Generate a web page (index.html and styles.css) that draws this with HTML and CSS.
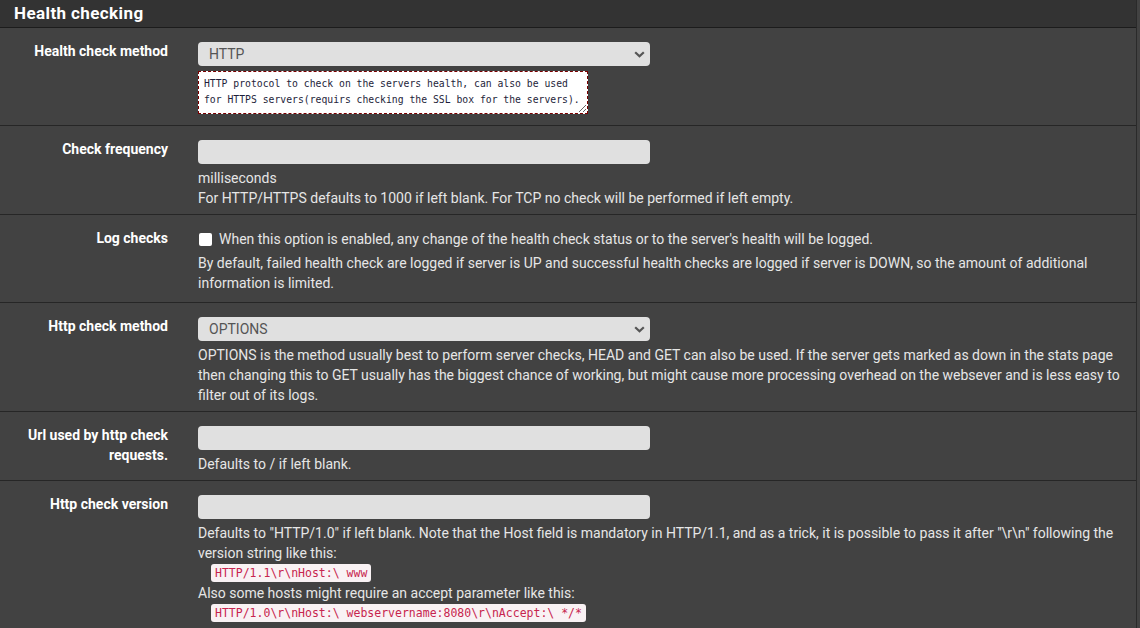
FILE: index.html
```html
<!DOCTYPE html>
<html>
<head>
<meta charset="utf-8">
<link rel="stylesheet" href="styles.css">
</head>
<body>
<div class="panel">
  <div class="panel-heading">Health checking</div>

  <div class="row r1">
    <div class="label">Health check method</div>
    <div class="ctrl">
      <div class="select-wrap">
        <select class="select"><option>HTTP</option></select>
        <svg class="chev" width="11" height="7" viewBox="0 0 11 7"><path d="M1.2 1.2 L5.5 5.3 L9.8 1.2" fill="none" stroke="#555" stroke-width="2.2"/></svg>
      </div>
      <textarea class="note" readonly>HTTP protocol to check on the servers health, can also be used for HTTPS servers(requirs checking the SSL box for the servers).</textarea>
    </div>
  </div>

  <div class="row">
    <div class="label">Check frequency</div>
    <div class="ctrl">
      <input class="input" type="text">
      <div class="help">milliseconds<br>For HTTP/HTTPS defaults to 1000 if left blank. For TCP no check will be performed if left empty.</div>
    </div>
  </div>

  <div class="row r3">
    <div class="label">Log checks</div>
    <div class="ctrl">
      <label class="check"><input type="checkbox" class="cb"> When this option is enabled, any change of the health check status or to the server's health will be logged.</label>
      <div class="help">By default, failed health check are logged if server is UP and successful health checks are logged if server is DOWN, so the amount of additional information is limited.</div>
    </div>
  </div>

  <div class="row">
    <div class="label">Http check method</div>
    <div class="ctrl">
      <div class="select-wrap">
        <select class="select"><option>OPTIONS</option></select>
        <svg class="chev" width="11" height="7" viewBox="0 0 11 7"><path d="M1.2 1.2 L5.5 5.3 L9.8 1.2" fill="none" stroke="#555" stroke-width="2.2"/></svg>
      </div>
      <div class="help">OPTIONS is the method usually best to perform server checks, HEAD and GET can also be used. If the server gets marked as down in the stats page then changing this to GET usually has the biggest chance of working, but might cause more processing overhead on the websever and is less easy to filter out of its logs.</div>
    </div>
  </div>

  <div class="row">
    <div class="label">Url used by http check requests.</div>
    <div class="ctrl">
      <input class="input" type="text">
      <div class="help">Defaults to / if left blank.</div>
    </div>
  </div>

  <div class="row">
    <div class="label">Http check version</div>
    <div class="ctrl">
      <input class="input" type="text">
      <div class="help">Defaults to "HTTP/1.0" if left blank. Note that the Host field is mandatory in HTTP/1.1, and as a trick, it is possible to pass it after "\r\n" following the version string like this:<br><code>HTTP/1.1\r\nHost:\ www</code><br>Also some hosts might require an accept parameter like this:<br><code>HTTP/1.0\r\nHost:\ webservername:8080\r\nAccept:\ */*</code></div>
    </div>
  </div>
</div>
</body>
</html>
```

FILE: styles.css
```css
html, body {
  margin: 0;
  padding: 0;
  background: #424242;
  height: 100%;
  overflow: hidden;
}
body {
  font-family: Roboto, "Liberation Sans", Arial, sans-serif;
  font-size: 14px;
  color: #e6e6e6;
}
.panel {
  width: 1137px;
  min-height: 628px;
  background: #424242;
  border-right: 1px solid #2a2a2a;
  box-sizing: border-box;
}
.panel-heading {
  height: 27px;
  line-height: 27px;
  background: #333333;
  color: #ffffff;
  font-weight: bold;
  font-size: 17px;
  letter-spacing: 0.4px;
  padding-left: 14px;
  border-bottom: 1px solid #1c1c1c;
}
.row {
  display: grid;
  grid-template-columns: 168px 927px;
  column-gap: 30px;
  padding: 14px 0 6px 0;
  border-bottom: 1px solid #262626;
}
.r1 { padding-bottom: 11px; }
.r3 { padding-bottom: 9px; }
.label {
  text-align: right;
  font-weight: bold;
  color: #ffffff;
  line-height: 20px;
  padding-left: 18px;
  margin-top: -1px;
}
.ctrl {
  display: flex;
  flex-direction: column;
  align-items: flex-start;
}
.select-wrap {
  position: relative;
  width: 452px;
  height: 24px;
}
.select {
  appearance: none;
  -webkit-appearance: none;
  width: 452px;
  height: 24px;
  border: none;
  border-radius: 4px;
  background: #e0e0e0;
  color: #555;
  font-family: Roboto, "Liberation Sans", Arial, sans-serif;
  font-size: 14px;
  padding: 0 0 0 11px;
  margin: 0;
  display: block;
}
.chev {
  position: absolute;
  right: 5px;
  top: 9px;
}
.input {
  width: 452px;
  height: 24px;
  box-sizing: border-box;
  border: none;
  border-radius: 4px;
  background: #e0e0e0;
  margin: 0;
  padding: 0 10px;
  display: block;
}
.note {
  margin-top: 5px;
  width: 390px;
  height: 43px;
  box-sizing: border-box;
  border: 1px dashed #7a0000;
  background: #ffffff;
  color: #1e1e3a;
  font-family: "DejaVu Sans Mono", "Liberation Mono", monospace;
  font-size: 9.75px;
  line-height: 16px;
  padding: 4px 5px;
  overflow: hidden;
  resize: both;
  display: block;
}
.help {
  margin-top: 4px;
  line-height: 20px;
  color: #e6e6e6;
}
.check {
  display: flex;
  align-items: center;
  line-height: 20px;
  gap: 7px;
  color: #e6e6e6;
}
.cb {
  appearance: none;
  -webkit-appearance: none;
  width: 13px;
  height: 13px;
  margin: 0 0 0 1px;
  background: #ffffff;
  border-radius: 2px;
  border: none;
}
code {
  display: inline-block;
  margin-left: 13px;
  font-family: "DejaVu Sans Mono", "Liberation Mono", monospace;
  font-size: 11.5px;
  line-height: 18px;
  padding: 0 4px;
  background: #f9f2f4;
  color: #c7254e;
  border-radius: 3px;
  vertical-align: top;
  margin-top: 1px;
  margin-bottom: 1px;
}
```
